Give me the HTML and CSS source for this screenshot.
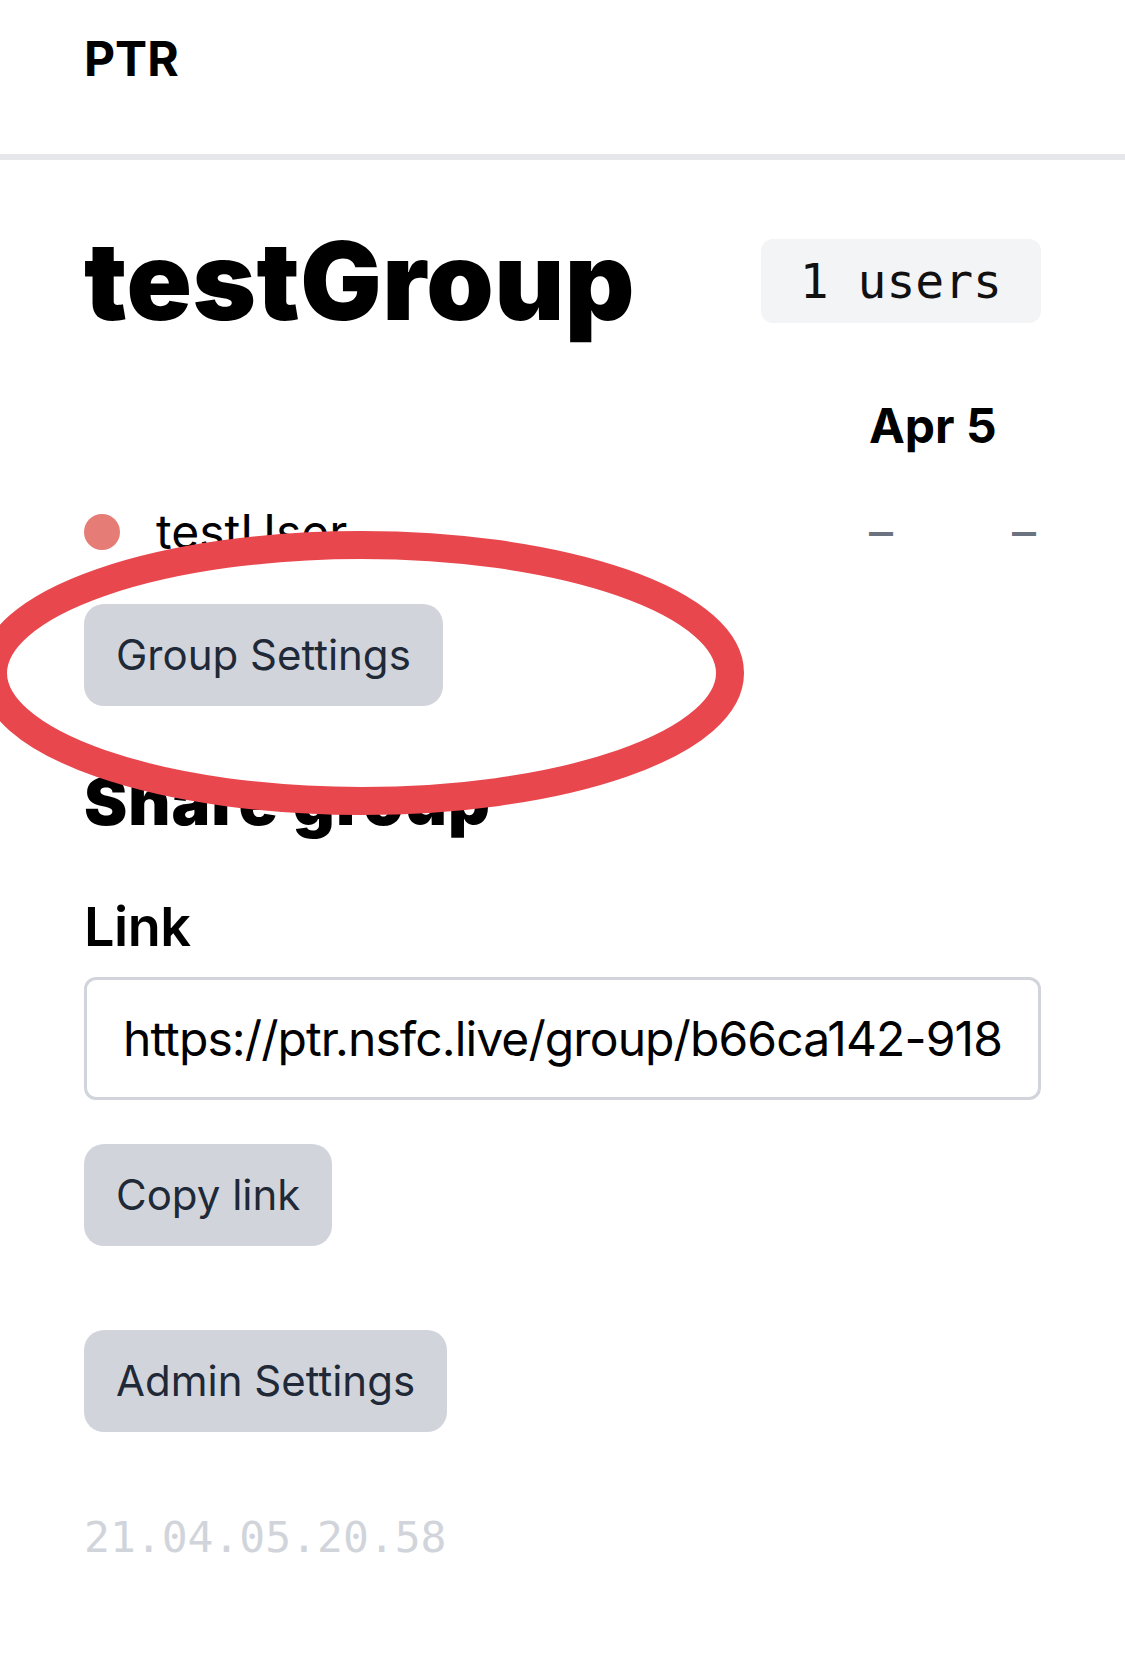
FILE: index.html
```html
<!DOCTYPE html>
<html lang="en">
<head>
<meta charset="utf-8">
<title>testGroup – PTR</title>
<link rel="stylesheet" href="styles.css">
</head>
<body>
<header class="topbar"><span class="brand">PTR</span></header>
<main class="page">
  <section class="group-head">
    <h1 class="group-title">testGroup</h1>
    <span class="badge">1 users</span>
  </section>
  <div class="schedule">
    <div class="cell"></div>
    <div class="cell date">Apr 5</div>
    <div class="cell"></div>
    <div class="cell user"><span class="dot"></span>testUser</div>
    <div class="cell dash">–</div>
    <div class="cell dash">–</div>
  </div>
  <button class="btn btn-group">Group Settings</button>
  <h2 class="section-title">Share group</h2>
  <label class="field-label" for="link">Link</label>
  <input id="link" class="link-input" type="text" readonly value="https://ptr.nsfc.live/group/b66ca142-9182-4d3f-a1b5-5c0e7d2f8a91">
  <button class="btn btn-copy">Copy link</button>
  <button class="btn btn-admin">Admin Settings</button>
  <div class="version">21.04.05.20.58</div>
</main>
<svg class="annotation" width="1125" height="1671" viewBox="0 0 1125 1671" aria-hidden="true">
  <ellipse cx="361.5" cy="673" rx="368.5" ry="128" fill="none" stroke="#e8474e" stroke-width="28"/>
</svg>
</body>
</html>
```

FILE: styles.css
```css
* { box-sizing: border-box; }

html, body {
  margin: 0;
  padding: 0;
  background: #ffffff;
}

body {
  position: relative;
  width: 1125px;
  min-height: 1671px;
  font-family: Inter, "Liberation Sans", sans-serif;
  color: #000000;
}

.topbar {
  height: 160px;
  padding: 23px 84px 0;
  border-bottom: 6px solid #e5e7eb;
}

.brand {
  display: block;
  font-size: 48px;
  line-height: 72px;
  font-weight: 700;
}

.page {
  display: flex;
  flex-direction: column;
  align-items: flex-start;
  padding: 0 84px;
}

.group-head {
  align-self: stretch;
  display: flex;
  align-items: center;
  justify-content: space-between;
  margin-top: 67px;
}

.group-title {
  margin: 0;
  font-size: 108px;
  line-height: 108px;
  font-weight: 900;
  letter-spacing: 0.5px;
}

.badge {
  font-family: "DejaVu Sans Mono", "Liberation Mono", monospace;
  font-size: 48px;
  line-height: 84px;
  padding: 0 39px;
  background: #f3f4f6;
  border-radius: 12px;
  color: #111111;
}

.schedule {
  align-self: stretch;
  display: grid;
  grid-template-columns: 1fr 143px 29px;
  row-gap: 34px;
  margin-top: 55px;
  font-size: 48px;
  line-height: 72px;
}

.cell { white-space: nowrap; }

.date { font-weight: 700; }

.user {
  display: flex;
  align-items: center;
}

.dot {
  width: 36px;
  height: 36px;
  border-radius: 50%;
  background: #e67c76;
  margin-right: 36px;
  flex: none;
}

.dash { color: #6b7280; }

.btn {
  height: 102px;
  padding: 0 32px;
  border: none;
  border-radius: 20px;
  background: #d1d5db;
  color: #1f2937;
  font-family: Inter, "Liberation Sans", sans-serif;
  font-size: 42px;
  line-height: 102px;
}

.btn-group { margin-top: 36px; }

.section-title {
  margin: 56px 0 0;
  font-size: 65px;
  line-height: 80px;
  font-weight: 900;
  letter-spacing: 1px;
}

.field-label {
  margin-top: 44px;
  font-size: 54px;
  line-height: 81px;
  font-weight: 600;
  letter-spacing: -0.5px;
}

.link-input {
  align-self: stretch;
  margin-top: 10px;
  height: 123px;
  padding: 0 36px;
  border: 3px solid #d1d5db;
  border-radius: 12px;
  background: #ffffff;
  color: #000000;
  font-family: Inter, "Liberation Sans", sans-serif;
  font-size: 48px;
  letter-spacing: -0.9px;
  outline: none;
}

.btn-copy { margin-top: 44px; }

.btn-admin { margin-top: 84px; }

.version {
  margin-top: 74px;
  font-family: "DejaVu Sans Mono", "Liberation Mono", monospace;
  font-size: 43px;
  line-height: 63px;
  color: #d1d5db;
}

.annotation {
  position: absolute;
  top: 0;
  left: 0;
  pointer-events: none;
}
```
